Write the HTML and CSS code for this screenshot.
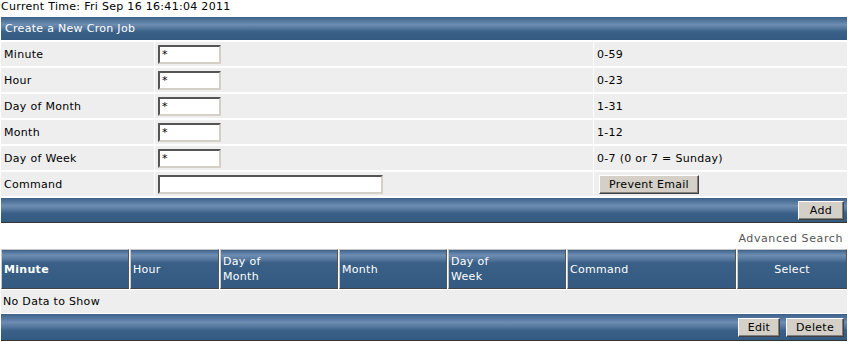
FILE: index.html
```html
<!DOCTYPE html>
<html lang="en">

<head>
    <meta charset="UTF-8" />
    <title>Cron Jobs</title>
    <link rel="stylesheet" href="styles.css">
</head>

<body>
    <div class="clock">Current Time: Fri Sep 16 16:41:04 2011</div>

    <!-- Neuer Job -->
    <table class="panel">
        <tr>
            <th colspan="3" class="bar title">Create a New Cron Job</th>
        </tr>
        <tr>
            <td class="label">Minute</td>
            <td class="entry"><input class="field" type="text" value="*" /></td>
            <td class="hint">0-59</td>
        </tr>
        <tr>
            <td class="label">Hour</td>
            <td class="entry"><input class="field" type="text" value="*" /></td>
            <td class="hint">0-23</td>
        </tr>
        <tr>
            <td class="label">Day of Month</td>
            <td class="entry"><input class="field" type="text" value="*" /></td>
            <td class="hint">1-31</td>
        </tr>
        <tr>
            <td class="label">Month</td>
            <td class="entry"><input class="field" type="text" value="*" /></td>
            <td class="hint">1-12</td>
        </tr>
        <tr>
            <td class="label">Day of Week</td>
            <td class="entry"><input class="field" type="text" value="*" /></td>
            <td class="hint">0-7 (0 or 7 = Sunday)</td>
        </tr>
        <tr>
            <td class="label">Command</td>
            <td class="entry"><input class="field field-wide" type="text" value="" /></td>
            <td class="hint"><button class="btn">Prevent Email</button></td>
        </tr>
        <tr>
            <td colspan="3" class="bar actions"><button class="btn btn-add">Add</button></td>
        </tr>
    </table>

    <div class="search">Advanced Search</div>

    <!-- Liste -->
    <table class="list">
        <tr>
            <th class="col-minute strong">Minute</th>
            <th class="col-hour">Hour</th>
            <th class="col-dom">Day of<br>Month</th>
            <th class="col-month">Month</th>
            <th class="col-dow">Day of<br>Week</th>
            <th class="col-cmd">Command</th>
            <th class="col-select">Select</th>
        </tr>
        <tr>
            <td colspan="7" class="empty">No Data to Show</td>
        </tr>
        <tr>
            <td colspan="7" class="bar actions">
                <button class="btn">Edit</button>
                <button class="btn">Delete</button>
            </td>
        </tr>
    </table>
</body>

</html>
```

FILE: styles.css
```css
html,
body {
    margin: 0;
    background: #fff;
}

body {
    font-family: "DejaVu Sans", Verdana, sans-serif;
    font-size: 11px;
    letter-spacing: 0.3px;
    color: #000;
}

.clock {
    height: 15px;
    line-height: 14px;
    padding-left: 1px;
}

table {
    width: 100%;
    border-collapse: separate;
    border-spacing: 1px 2px;
}

/* Blaue Leisten mit Glanzstreifen */
.bar {
    background: linear-gradient(to bottom, #3d6189 0%, #587ba2 20%, #6e8db1 32%, #57799f 48%, #3a6087 64%, #335a80 100%);
    color: #fff;
    font-weight: normal;
    text-align: left;
}

.title {
    height: 23px;
    padding: 0 0 0 4px;
}

.panel td {
    background: #eeeeee;
    height: 24px;
    padding: 0;
}

.label {
    width: 150px;
    padding-left: 3px !important;
}

.entry {
    width: 435px;
    padding-left: 3px !important;
}

.hint {
    padding-left: 3px !important;
}

.panel td.bar {
    background: linear-gradient(to bottom, #3d6189 0%, #587ba2 20%, #6e8db1 32%, #57799f 48%, #3a6087 64%, #335a80 100%);
    border-bottom: 1px solid #333;
    height: 24px;
}

.actions {
    text-align: right;
    padding-right: 3px !important;
}

.field {
    width: 63px;
    height: 19px;
    box-sizing: border-box;
    font-family: "DejaVu Sans", Verdana, sans-serif;
    font-size: 11px;
    padding: 0 2px;
    background: #fff;
    border: 2px solid;
    border-color: #555 #d4d0c8 #d4d0c8 #555;
    outline: none;
    vertical-align: middle;
}

.field-wide {
    width: 225px;
}

.btn {
    font-family: "DejaVu Sans", Verdana, sans-serif;
    font-size: 11px;
    letter-spacing: 0.3px;
    color: #000;
    background: #d4d0c8;
    height: 19px;
    padding: 0 9px;
    border: 1px solid;
    border-color: #fff #404040 #404040 #fff;
    box-shadow: inset -1px -1px 0 #808080;
    vertical-align: middle;
    margin-left: 2px;
}

.btn-add {
    padding: 0 11px;
}

.search {
    text-align: right;
    color: #555;
    letter-spacing: 0.6px;
    padding: 7px 5px 2px 0;
    line-height: 14px;
}

.list {
    border-spacing: 1px 1px;
}

.list th {
    background: linear-gradient(to bottom, #3d6189 0%, #5c7ea4 8%, #6e8db1 14%, #57799f 24%, #3a6087 34%, #335a80 100%);
    color: #fff;
    font-weight: normal;
    text-align: left;
    height: 38px;
    padding: 0 2px;
    border: 1px solid;
    border-color: #c8c8c8 #555 #444 #c8c8c8;
    line-height: 15px;
}

.list th.strong {
    font-weight: bold;
}

.col-minute { width: 122px; }
.col-hour { width: 83px; }
.col-dom { width: 112px; }
.col-month { width: 102px; }
.col-dow { width: 112px; }
.col-cmd { width: 163px; }

.list th.col-select {
    text-align: center;
}

.empty {
    background: #eeeeee;
    height: 23px;
    padding: 0 0 0 2px;
}

.list td.bar {
    height: 26px;
    border-bottom: 1px solid #333;
    padding: 0;
}
```
